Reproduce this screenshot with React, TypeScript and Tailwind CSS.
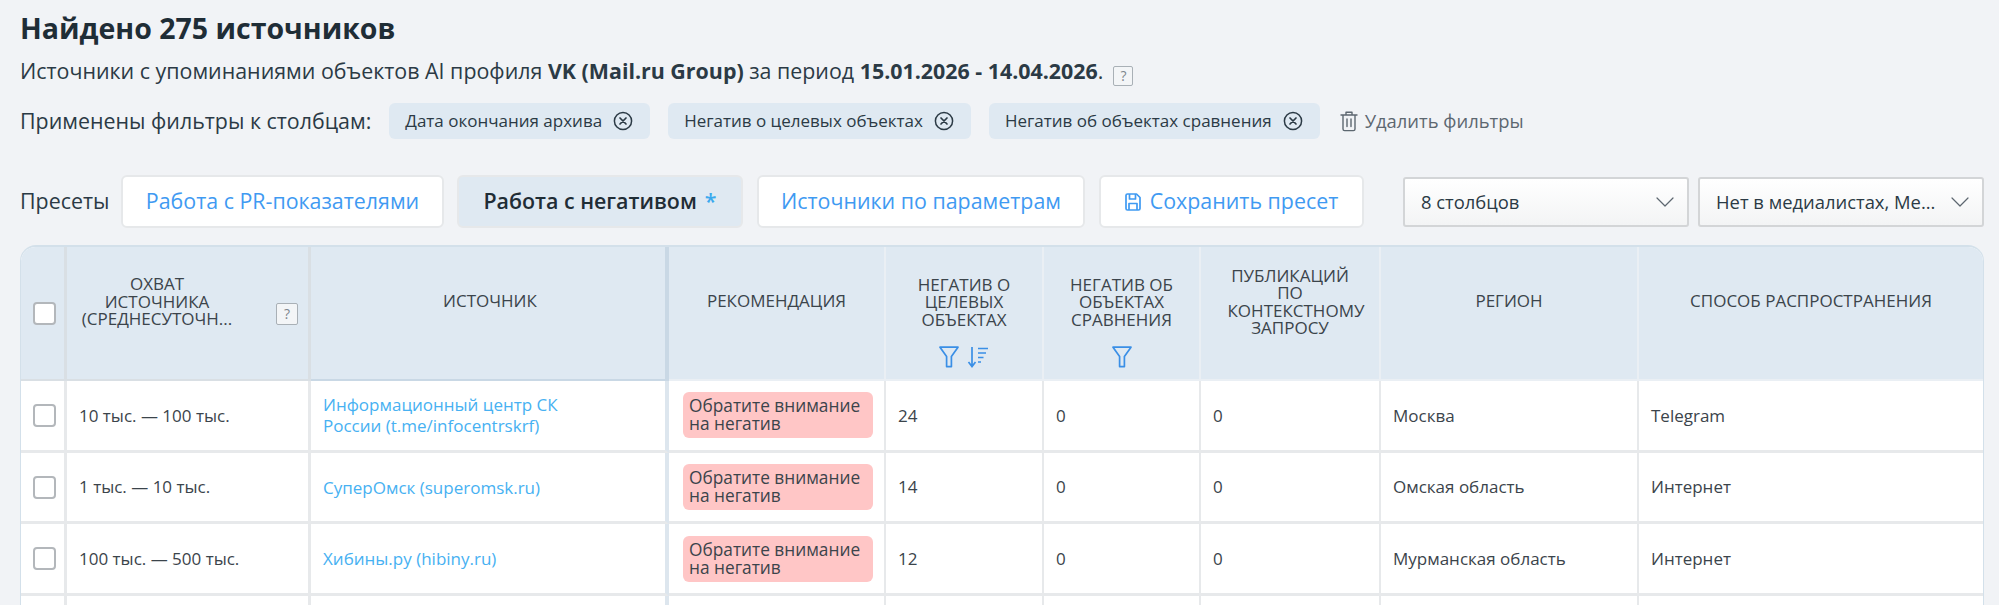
import React from 'react';
import { ChevronDown } from 'lucide-react';

interface Row {
    reach: string;
    source: string[];
    negative: string;
    region: string;
    channel: string;
}

const rows: Row[] = [
    { reach: '10 тыс. — 100 тыс.', source: ['Информационный центр СК', 'России (t.me/infocentrskrf)'], negative: '24', region: 'Москва', channel: 'Telegram' },
    { reach: '1 тыс. — 10 тыс.', source: ['СуперОмск (superomsk.ru)'], negative: '14', region: 'Омская область', channel: 'Интернет' },
    { reach: '100 тыс. — 500 тыс.', source: ['Хибины.ру (hibiny.ru)'], negative: '12', region: 'Мурманская область', channel: 'Интернет' },
];

function CloseCircle() {
    return (
        <svg width="20" height="20" viewBox="0 0 20 20" fill="none" stroke="#2b3a45" strokeWidth="1.5" strokeLinecap="round">
            <circle cx="10" cy="10" r="8.6" />
            <path d="M7 7l6 6M13 7l-6 6" strokeWidth="1.7" />
        </svg>
    );
}

function TrashIcon() {
    return (
        <svg width="20" height="22" viewBox="0 0 20 22" fill="none" stroke="#5d6770" strokeWidth="1.4" strokeLinecap="round" strokeLinejoin="round">
            <path d="M2 5h16M7 5V2.2h6V5M4 5v14a1.6 1.6 0 0 0 1.6 1.6h8.8A1.6 1.6 0 0 0 16 19V5M8 9v7.5M12 9v7.5" />
        </svg>
    );
}

function SaveIcon() {
    return (
        <svg width="16" height="18" viewBox="0 0 16 18" fill="none" stroke="#3f9af2" strokeWidth="1.7" strokeLinejoin="round">
            <path d="M1 2.5A1.5 1.5 0 0 1 2.5 1h9L15 4.5v11a1.5 1.5 0 0 1-1.5 1.5h-11A1.5 1.5 0 0 1 1 15.5z" />
            <path d="M4.5 1v5h6V1M4 17v-6.5h8V17" />
        </svg>
    );
}

function FilterIcon() {
    return (
        <svg width="20" height="22" viewBox="0 0 20 22" fill="none" stroke="#3a8fe6" strokeWidth="1.7" strokeLinejoin="round">
            <path d="M1 1.2h18l-6.6 9.2v10.2H7.6V10.4z" />
        </svg>
    );
}

function SortIcon() {
    return (
        <svg width="22" height="22" viewBox="0 0 22 22" fill="none" stroke="#3a8fe6" strokeWidth="1.7">
            <path d="M5 1v18M1.5 16l3.5 4.5L8.5 16" />
            <path d="M11 2.5h10M11 7h8M11 11.5h5.5M11 16h3" />
        </svg>
    );
}

function Hint({ className }: { className: string }) {
    return (
        <span className={`inline-flex items-center justify-center rounded-[2px] border border-[#a9b0b6] bg-[#f3f5f7] text-[14px] leading-none text-[#7d868d] ${className}`}>?</span>
    );
}

function Checkbox() {
    return <span className="block h-[23px] w-[23px] rounded-[4px] border-2 border-[#b3b7bb] bg-white" />;
}

function Chip({ label }: { label: string }) {
    return (
        <span className="flex h-9 items-center gap-[11px] rounded-[6px] bg-[#dfe9f2] pl-4 pr-[17px] text-[17px] text-[#2b3a45]">
            {label}
            <CloseCircle />
        </span>
    );
}

function PresetButton({ children, className }: { children: React.ReactNode; className: string }) {
    return (
        <button className={`flex h-[53px] shrink-0 items-center justify-center rounded-[6px] border-2 border-[#e6e8ea] text-[21.4px] ${className}`}>
            {children}
        </button>
    );
}

function Select({ label, className }: { label: string; className: string }) {
    return (
        <div className={`flex h-[50px] shrink-0 items-center justify-between rounded-[3px] border-2 border-[#d3d5d7] bg-gradient-to-b from-white to-[#f3f4f5] pl-[16px] pr-[6px] text-[18.4px] text-[#2b3a45] ${className}`}>
            {label}
            <ChevronDown size={32} strokeWidth={0.9} color="#5d6770" />
        </div>
    );
}

const th = 'border-r-2 border-b-2 border-[#eaeff4] align-top text-center text-[17px] font-normal uppercase leading-[17.3px] text-[#3b444b]';
const td = 'border-r-2 border-b-3 border-[#e7e9eb] px-[12px] text-[17px] text-[#3b444b]';

export default function App() {
    return (
        <div className="h-[605px] overflow-hidden bg-[#f1f3f6] pl-[20px] pr-[15px] font-['Open_Sans',sans-serif]">
            <h1 className="pt-[11px] text-[28.5px] font-bold leading-[35px] text-[#1f2d36]">Найдено 275 источников</h1>
            <p className="mt-[11px] text-[21.4px] leading-[27px] text-[#2b3a45]">
                Источники с упоминаниями объектов AI профиля <b>VK (Mail.ru Group)</b> за период <b>15.01.2026 - 14.04.2026</b>.
                <Hint className="ml-[10px] h-[20px] w-[20px] align-[-2px]" />
            </p>
            <div className="mt-[16px] flex items-center">
                <span className="text-[21.4px] leading-[38px] text-[#2b3a45]">Применены фильтры к столбцам:</span>
                <div className="ml-[18px] flex gap-[18px]">
                    <Chip label="Дата окончания архива" />
                    <Chip label="Негатив о целевых объектах" />
                    <Chip label="Негатив об объектах сравнения" />
                </div>
                <span className="ml-[19px] flex items-center gap-[6px] text-[18.4px] text-[#5d6770]">
                    <TrashIcon />
                    Удалить фильтры
                </span>
            </div>
            <div className="mt-[35px] flex items-center">
                <span className="w-[101px] shrink-0 text-[21.4px] text-[#2b3a45]">Пресеты</span>
                <PresetButton className="w-[323px] bg-white text-[#3f9af2]">Работа с PR-показателями</PresetButton>
                <PresetButton className="ml-[13px] w-[286px] bg-[#dfe9f2] font-semibold text-[#1f2d36]">
                    Работа с негативом <span className="ml-[8px] text-[#3aa9ee]">*</span>
                </PresetButton>
                <PresetButton className="ml-[14px] w-[328px] bg-white text-[#3f9af2]">Источники по параметрам</PresetButton>
                <PresetButton className="ml-[14px] w-[265px] gap-[9px] bg-white text-[#3f9af2]">
                    <SaveIcon />
                    Сохранить пресет
                </PresetButton>
                <Select label="8 столбцов" className="ml-[39px] w-[286px]" />
                <Select label="Нет в медиалистах, Ме..." className="ml-[9px] w-[286px]" />
            </div>
            <div className="mt-[17px] overflow-hidden rounded-t-[16px] border-x border-t-2 border-[#d3e0ea] bg-white">
                <table className="w-full table-fixed border-separate border-spacing-0">
                    <colgroup>
                        <col className="w-[46px]" />
                        <col className="w-[244px]" />
                        <col className="w-[358px]" />
                        <col className="w-[217px]" />
                        <col className="w-[158px]" />
                        <col className="w-[157px]" />
                        <col className="w-[180px]" />
                        <col className="w-[258px]" />
                        <col />
                    </colgroup>
                    <thead>
                        <tr className="h-[134px] bg-[#dfe9f2]">
                            <th className="border-r-3 border-b-2 border-[#d9dfe4] pl-[12px] text-left align-middle">
                                <Checkbox />
                            </th>
                            <th className="border-r-3 border-b-2 border-[#d9dfe4] px-[10px] pt-[28px] align-top text-[17px] font-normal uppercase leading-[17.5px] text-[#3b444b]">
                                <div className="flex items-center justify-between">
                                    <span className="w-[160px] text-center">
                                        Охват
                                        <br />
                                        источника
                                        <br />
                                        (среднесуточн...
                                    </span>
                                    <Hint className="mt-[26px] h-[22px] w-[22px]" />
                                </div>
                            </th>
                            <th className="border-r-4 border-b-2 border-[#c9d8e5] pl-[4px] pt-[45px] align-top text-[17px] font-normal uppercase leading-[17.3px] text-[#3b444b]">Источник</th>
                            <th className={`${th} pt-[45px]`}>Рекомендация</th>
                            <th className={`${th} pt-[29px]`}>
                                <div className="mx-auto w-[130px]">Негатив о целевых объектах</div>
                                <div className="mt-[18px] flex items-center justify-center gap-[8px]">
                                    <FilterIcon />
                                    <SortIcon />
                                </div>
                            </th>
                            <th className={`${th} pt-[29px]`}>
                                <div className="mx-auto w-[130px]">Негатив об объектах сравнения</div>
                                <div className="mt-[18px] flex justify-center">
                                    <FilterIcon />
                                </div>
                            </th>
                            <th className={`${th} pt-[20px]`}>
                                <div className="mx-auto w-[125px]">Публикаций по контекстному запросу</div>
                            </th>
                            <th className={`${th} pt-[45px]`}>Регион</th>
                            <th className="border-b-2 border-[#eaeff4] pt-[45px] align-top text-center text-[17px] font-normal uppercase leading-[17.3px] text-[#3b444b]">Способ распространения</th>
                        </tr>
                    </thead>
                    <tbody>
                        {rows.map((row) => (
                            <tr key={row.region} className="h-[71.7px]">
                                <td className="border-r-3 border-b-3 border-[#e7e9eb] pl-[12px]">
                                    <Checkbox />
                                </td>
                                <td className="border-r-3 border-b-3 border-[#e7e9eb] px-[12px] text-[17px] text-[#3b444b]">{row.reach}</td>
                                <td className="border-r-4 border-b-3 border-r-[#dde6ee] border-b-[#e7e9eb] px-[12px] text-[17px] leading-[21px] text-[#47b1f2]">
                                    {row.source.map((line) => (
                                        <div key={line}>{line}</div>
                                    ))}
                                </td>
                                <td className={td}>
                                    <div className="ml-[2px] w-[190px] rounded-[6px] bg-[#ffc6c6] py-[5px] pl-[6px] pr-[8px] text-[17.3px] leading-[18px] text-[#3b444b]">
                                        Обратите внимание на негатив
                                    </div>
                                </td>
                                <td className={td}>{row.negative}</td>
                                <td className={td}>0</td>
                                <td className={td}>0</td>
                                <td className={td}>{row.region}</td>
                                <td className="border-b-3 border-[#e7e9eb] px-[12px] text-[17px] text-[#3b444b]">{row.channel}</td>
                            </tr>
                        ))}
                        <tr className="h-[72px]">
                            <td className="border-r-3 border-[#e7e9eb]" />
                            <td className="border-r-3 border-[#e7e9eb]" />
                            <td className="border-r-4 border-[#dde6ee]" />
                            <td className="border-r-2 border-[#e7e9eb]" />
                            <td className="border-r-2 border-[#e7e9eb]" />
                            <td className="border-r-2 border-[#e7e9eb]" />
                            <td className="border-r-2 border-[#e7e9eb]" />
                            <td className="border-r-2 border-[#e7e9eb]" />
                            <td />
                        </tr>
                    </tbody>
                </table>
            </div>
        </div>
    );
}
